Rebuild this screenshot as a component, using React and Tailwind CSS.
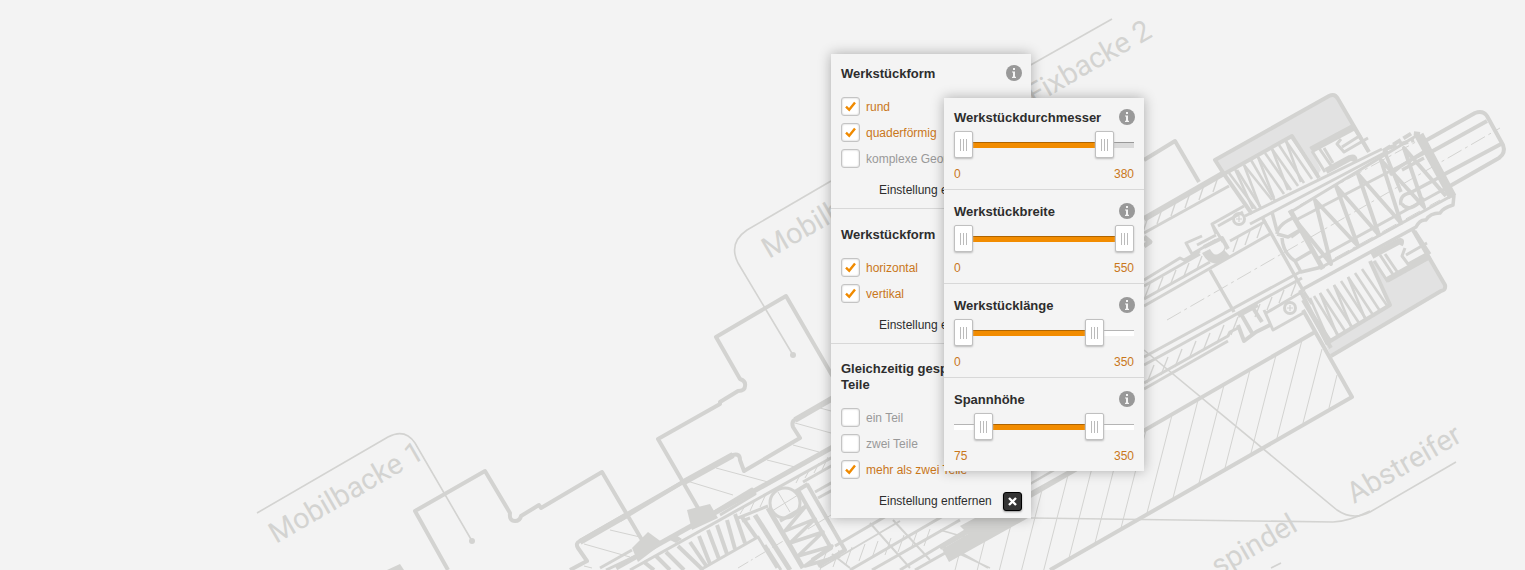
import { useState } from "react";

const LINE = "#d3d3d1";

/* Hatching and springs are lists of [x1, y1, x2, y2] segments. */
const Segments = ({ list, width }) =>
  list.map((s, i) => (
    <line key={i} x1={s[0]} y1={s[1]} x2={s[2]} y2={s[3]} strokeWidth={width} />
  ));

const repeat = (count, [x1, y1, x2, y2], [dx, dy]) =>
  Array.from({ length: count }, (_, i) => [
    x1 + dx * i,
    y1 + dy * i,
    x2 + dx * i,
    y2 + dy * i,
  ]);

const jawHatch = [
  [687, 481, 733, 495],
  [716, 468, 768, 482],
  [767, 460, 795, 467],
  [793, 445, 819, 452],
  [795, 423, 831, 433],
  [820, 408, 831, 411],
  [584, 544, 630, 557],
  [610, 530, 640, 537],
  [584, 566, 592, 568],
];

const coilsUpper = [
  [1229, 173, 1256, 209], [1235, 169, 1253, 209], [1237, 170, 1261, 208],
  [1244, 165, 1272, 200], [1244, 165, 1260, 207], [1251, 160, 1275, 201],
  [1258, 157, 1284, 194], [1258, 157, 1274, 198], [1265, 153, 1291, 190],
  [1272, 149, 1298, 186], [1272, 149, 1288, 190], [1279, 145, 1304, 183],
  [1286, 141, 1312, 179], [1286, 141, 1301, 182], [1292, 138, 1318, 175],
];

const coilsLower = [
  [1304, 301, 1331, 341], [1310, 298, 1329, 341], [1314, 296, 1338, 335],
  [1320, 293, 1345, 331], [1320, 293, 1338, 337], [1327, 289, 1352, 327],
  [1334, 285, 1359, 323], [1334, 285, 1352, 329], [1341, 281, 1366, 319],
  [1348, 277, 1373, 315], [1348, 277, 1366, 321], [1355, 273, 1380, 311],
  [1362, 269, 1388, 307],
];

function TechnicalDrawing() {
  return (
    <svg
      viewBox="0 0 1525 570"
      preserveAspectRatio="xMinYMin slice"
      className="absolute inset-0 h-full w-full"
      aria-hidden="true"
    >
      <g fill="#e2e2e2">
        <path d="M1216 160 1331 95 1337 98 1353 125 1311 150 1321 170 1317 176 1292 136 1224 174Z" />
        <path d="M1372 262 1389 305 1325 343 1331 356 1445 287 1428 259 1388 281 1376 260Z" />
      </g>

      <g fill="none" stroke={LINE} strokeLinejoin="round">
        {/* leader lines */}
        <g strokeWidth="1.6">
          <path d="M257 513 388 437Q405 428 415 443L472 541" />
          <path d="M831 181 747 230Q728 243 738 263L793 355" />
          <path d="M1112 19 1020 71" />
          <path d="M1144 350 1337 510Q1353 521 1370 512L1456 462" />
          <path d="M1031 518 1333 522Q1347 522 1370 511" />
          <path d="M1271 568 1281 563" />
        </g>

        {/* jaws */}
        <g strokeWidth="4">
          <path d="M448 570 415 511 485 471 510 513Q509 521 515 521Q520 521 521 516L539 505 541 508 602 472 642 540" />
          <path d="M698 508 658 439 720 404V402L738 391Q745 391 745 386Q746 381 740 379L716 337 786 296 840 389" />
          <path d="M570 570 587 561 578 548Q575 543 580 541L683 482" />
          <path d="M620 520 683 482 733 455Q740 453 740 460L744 471 800 438 793 427Q791 421 796 419" />
          <path d="M1144 160 1175 141 1199 182" />
        </g>
        <path d="M580 542 627 515M684 482 733 455M795 420 840 394" strokeWidth="6" />
        <Segments list={jawHatch} width="1" />

        {/* guide rails of the lower left body */}
        <path d="M616 568 840 443" strokeWidth="5" />
        <path d="M630 570 840 453M714 512 752 489 755 494 720 515M600 568 632 550M606 570 638 555" strokeWidth="3" />
        <Segments
          list={[
            [644, 562, 654, 570], [656, 556, 670, 570], [666, 552, 684, 570],
            [678, 546, 703, 570], [690, 542, 707, 567], [699, 536, 710, 564],
            [708, 530, 719, 559], [717, 525, 727, 554], [727, 520, 735, 549],
            [735, 514, 745, 543], [742, 517, 756, 537],
          ]}
          width="4"
        />
        <path d="M700 570 758 537 777 568M738 518 768 506M742 521 750 518M765 545 781 570" strokeWidth="3" />
        <path d="M755 515 790 570M768 508 803 568" strokeWidth="5" />
        <circle cx="785" cy="503" r="15" strokeWidth="3" />
        <path d="M778 492 790 512M772 511 798 495M808 529 831 515" strokeWidth="1" />
        <path d="M780 521 806 506 785 531 815 519 790 543 823 532 798 556 832 546 805 566 840 556" strokeWidth="3.5" />
        <path d="M798 490 831 548 812 560M807 484 845 550 818 566M795 492 808 484" strokeWidth="4" />
        <path d="M803 482 840 461M815 492 840 478M818 498 840 486" strokeWidth="3" />
        <path d="M740 514 745 506M750 511 755 500M760 507 766 494M796 483 800 475M805 478 810 469M814 473 819 463M822 470 828 457" strokeWidth="1" />
        <path d="M738 568 785 540" strokeWidth="1" strokeDasharray="12 3 2 3" />

        {/* lower middle body, partly below the filter panels */}
        <path d="M835 546 900 508M850 570 950 512M872 570 960 520M900 570 980 522M915 570 1000 522" strokeWidth="3" />
        <path d="M820 568 900 521M832 554 850 568M870 523 910 568M893 520 930 560" strokeWidth="2" />
        <Segments list={repeat(9, [826, 553, 820, 570], [13, -3])} width="1" />
        <path d="M940 530 975 540M940 545 990 568M960 552 988 568" strokeWidth="1.5" />
        <path d="M1315 332 940 548M1303 310 1352 397 1050 570" strokeWidth="4" />
        <path d="M1075 458 1030 484M1030 493 1073 469" strokeWidth="2.5" />
        <Segments list={repeat(14, [1302, 340, 1277, 438], [-26, 15])} width="1" />
        <path d="M1322 349 1303 423M1337 375 1329 408" strokeWidth="1" />

        {/* upper housing */}
        <path d="M1144 219 1224 173" strokeWidth="6" />
        <path d="M1224 174 1215 160 1329 96Q1335 93 1338 99L1369 152" strokeWidth="4" />
        <path d="M1224 174 1292 136 1319 178M1224 174 1252 214" strokeWidth="4" />
        <path d="M1144 233 1229 186" strokeWidth="3" />
        <Segments list={repeat(6, [1218, 177, 1213, 192], [-14, 8])} width="1.3" />
        <Segments list={coilsUpper} width="2.6" />
        <path d="M1311 150 1354 127" strokeWidth="7" />
        <path d="M1312 151 1325 172M1319 148 1332 167M1324 148 1333 163" strokeWidth="3" />
        <path d="M1354 128 1368 151M1341 139 1337 144 1344 152 1368 138M1342 147 1361 135" strokeWidth="3" />
        <path d="M1326 171 1350 158Q1356 156 1354 162" strokeWidth="6" />
        <path d="M1245 216 1382 149M1250 224 1388 151" strokeWidth="3" />

        {/* clamp elements on the upper tube */}
        <path d="M1244 206 1212 224 1216 234M1243 212 1218 226M1212 224 1223 242M1216 240 1192 254 1186 243 1202 236M1197 245 1216 235" strokeWidth="3" />
        <path d="M1206 251Q1214 266 1227 253" strokeWidth="9" />
        <path d="M1204 247 1222 238 1228 249" strokeWidth="4" />
        <circle cx="1239" cy="219" r="5.5" strokeWidth="3" />
        <path d="M1236 219H1242M1239 216V222" strokeWidth="1.2" />
        <path d="M1144 280 1180 258 1184 260 1200 251M1144 286 1200 254M1230 241 1266 221M1144 306 1270 234M1144 299 1210 262" strokeWidth="3" />
        <Segments list={repeat(5, [1202, 256, 1197, 269], [-13, 7])} width="1.3" />
        <Segments list={repeat(4, [1262, 224, 1257, 238], [-12, 7])} width="1.3" />
        <path d="M1144 237 1150 242 1144 246" strokeWidth="5" />

        {/* tube with its long spring */}
        <path d="M1262 217 1304 292M1210 270 1234 312M1272 212 1277 231" strokeWidth="3.5" />
        <path d="M1277 234Q1278 224 1295 217M1277 234 1288 237 1300 230M1282 238Q1283 253 1295 261L1312 251M1295 261 1301 272 1322 267M1291 237 1302 229" strokeWidth="3.5" />
        <path d="M1289 213 1416 136M1322 267 1453 195M1294 221 1425 153M1317 259 1448 187" strokeWidth="3" />
        <path d="M1290 210 1323 269M1416 134 1451 198M1421 134 1454 196" strokeWidth="5" />
        <path d="M1292 216 1331 264 1315 200 1358 246 1336 186 1379 235 1358 174 1401 223 1381 160 1424 207 1404 148 1446 196" strokeWidth="4" />
        <path d="M1384 150 1401 192M1390 175 1401 166 1430 148M1401 205Q1399 195 1410 193L1440 177M1402 204Q1409 214 1424 198M1402 170 1424 158" strokeWidth="3.5" />
        <path d="M1383 151 1412 133 1420 134M1388 148 1414 140" strokeWidth="4" strokeDasharray="9 3" />
        <path d="M1454 195 1453 205Q1443 208 1440 213Q1430 213 1426 220Q1420 219 1416 227L1303 289" strokeWidth="3.5" />
        <path d="M1167 320 1500 128M1300 205 1425 137M1335 258 1440 200" strokeWidth="1" strokeDasharray="16 4 3 4" />

        {/* spindle end */}
        <path d="M1425 141 1475 113Q1483 110 1487 116L1503 145Q1506 153 1499 158L1450 186" strokeWidth="4" />
        <path d="M1431 152 1487 121M1443 175 1501 144" strokeWidth="4" />

        {/* lower housing */}
        <path d="M1413 230 1445 285Q1446 290 1441 291L1331 356M1303 300 1331 348" strokeWidth="4" />
        <path d="M1300 290 1327 343 1390 305 1370 261" strokeWidth="4" />
        <Segments list={coilsLower} width="2.6" />
        <path d="M1374 261 1388 282M1380 255 1394 276M1385 254 1398 273" strokeWidth="3" />
        <path d="M1387 280 1430 256" strokeWidth="6" />
        <path d="M1372 256 1398 242Q1403 239 1400 245" strokeWidth="6" />
        <path d="M1405 248 1402 256 1408 264 1430 252M1406 255 1427 243M1415 231 1430 254" strokeWidth="3" />
        <path d="M1144 357 1300 272M1144 365 1302 278M1144 383 1228 336 1230 332 1240 327M1144 389 1228 341M1304 292 1312 304" strokeWidth="3" />
        <Segments list={repeat(7, [1238, 317, 1231, 335], [-14, 8])} width="1.3" />
        <Segments list={repeat(4, [1296, 283, 1291, 296], [-12, 7])} width="1.3" />
        <path d="M1238 325 1244 341 1256 332 1270 325M1241 314 1252 333M1253 308 1262 322M1238 316 1258 305" strokeWidth="4" />
        <path d="M1264 310 1273 330 1305 312M1266 313 1300 293" strokeWidth="3" />
        <circle cx="1290" cy="308" r="5.5" strokeWidth="3" />
        <path d="M1287 308H1293M1290 305V311" strokeWidth="1.2" />
      </g>

      <g fill={LINE}>
        <circle cx="472" cy="541" r="3" />
        <circle cx="793" cy="355" r="3" />
        <path d="M687 510 698 507 710 504 718 518 692 530Z" />
        <path d="M632 548 648 532 663 543 638 562Z" />
        <path d="M670 540 676 535 682 539 676 543Z" />
        <path d="M942 549 968 534 960 526 975 518H1028L949 562Z" />
        <path d="M387 570 400 564 404 570Z" />
      </g>

      <g fill={LINE} fontFamily="Roboto, sans-serif" fontSize="29">
        <text transform="translate(276 544) rotate(-30)">Mobilbacke 1</text>
        <text transform="translate(769 259) rotate(-30)">Mobilbacke 2</text>
        <text transform="translate(1034 105) rotate(-30)">Fixbacke 2</text>
        <text transform="translate(1354 504) rotate(-30)">Abstreifer</text>
        <text transform="translate(1299 530) rotate(-30)" textAnchor="end">
          spindel
        </text>
      </g>
    </svg>
  );
}

function InfoButton({ topic }) {
  return (
    <button type="button" aria-label={`Info: ${topic}`} className="h-4 w-4 shrink-0">
      <svg viewBox="0 0 16 16" className="h-4 w-4">
        <circle cx="8" cy="8" r="8" fill="#999" />
        <path d="M7 3h2v2H7zM6 6.4h3v5.4h1V13H6v-1.2h1V7.6H6z" fill="#f4f4f4" />
      </svg>
    </button>
  );
}

function Heading({ children, info }) {
  return (
    <div className="flex items-start justify-between pr-[9px] pl-2.5">
      <h2
        className={`pt-px text-[13px] leading-4 font-bold text-[#2d2d2d] ${info ? "" : "max-w-[160px]"}`}
      >
        {children}
      </h2>
      {info && <InfoButton topic={children} />}
    </div>
  );
}

function CheckRow({ label, initial }) {
  const [checked, setChecked] = useState(initial);
  return (
    <label
      className={`flex h-[26px] items-center gap-1.5 whitespace-nowrap ${checked ? "text-[#c9771b]" : "text-[#999]"}`}
    >
      <span className="grid shrink-0">
        <input
          type="checkbox"
          checked={checked}
          onChange={(e) => setChecked(e.target.checked)}
          className="col-start-1 row-start-1 h-[19px] w-[19px] appearance-none rounded-[3px] border border-[#c4c4c4] bg-white shadow-[inset_0_0_2px_#bbb]"
        />
        {checked && (
          <svg
            viewBox="0 0 19 19"
            className="pointer-events-none col-start-1 row-start-1 h-[19px] w-[19px]"
            fill="none"
            stroke="#f08a00"
            strokeWidth="2.4"
          >
            <path d="M5 9.6 8.2 12.8 14 5.4" />
          </svg>
        )}
      </span>
      <span className="pt-0.5">{label}</span>
    </label>
  );
}

function FilterGroup({ title, info, options, className }) {
  return (
    <section className={className}>
      <Heading info={info}>{title}</Heading>
      <div className="mt-[11px] pl-2.5">
        {options.map(([label, on]) => (
          <CheckRow key={label} label={label} initial={on} />
        ))}
      </div>
      <button
        type="button"
        className="mt-[9px] flex h-5 w-full items-center justify-between pr-[9px] pl-12 text-[#2d2d2d]"
      >
        Einstellung entfernen
        <span className="grid h-[19px] w-[19px] place-items-center rounded-[3px] border border-black bg-[#333] shadow-[0_1px_2px_#999]">
          <svg viewBox="0 0 9 9" className="h-[9px] w-[9px]" stroke="#fff" strokeWidth="2.4">
            <path d="M1 1 8 8M8 1 1 8" />
          </svg>
        </span>
      </button>
    </section>
  );
}

function Handle({ fraction }) {
  return (
    <span
      className="pointer-events-none absolute top-0 flex h-[27px] w-[19px] items-center justify-center gap-0.5 rounded-[2px] border border-[#c0c0c0] bg-white shadow-[0_1px_2px_#bbb]"
      style={{ left: `calc((100% - 19px) * ${fraction})` }}
    >
      <i className="h-3 w-px bg-[#bbb]" />
      <i className="h-3 w-px bg-[#bbb]" />
      <i className="h-3 w-px bg-[#bbb]" />
    </span>
  );
}

function RangeFilter({ title, min, max, from, to, dark, className }) {
  const [low, setLow] = useState(from);
  const [high, setHigh] = useState(to);
  const part = (v) => (v - min) / (max - min);
  const inputClass =
    "pointer-events-none absolute inset-0 h-full w-full opacity-0 [&::-webkit-slider-thumb]:pointer-events-auto";
  return (
    <section className={className}>
      <Heading info>{title}</Heading>
      <div className="relative mx-2.5 mt-[5px] flex h-7 items-center">
        <div
          className={`h-1.5 w-full border-t ${dark ? "border-[#999] bg-[#dadada]" : "border-[#b5b5b5] bg-white"}`}
        >
          <div
            className="-mt-px h-1.5 border-t border-[#b06500] bg-[#f28c00]"
            style={{
              marginLeft: `${part(low) * 100}%`,
              width: `${(part(high) - part(low)) * 100}%`,
            }}
          />
        </div>
        <Handle fraction={part(low)} />
        <Handle fraction={part(high)} />
        <input
          type="range"
          aria-label={`${title} von`}
          min={min}
          max={max}
          value={low}
          onChange={(e) => setLow(Math.min(+e.target.value, high))}
          className={inputClass}
        />
        <input
          type="range"
          aria-label={`${title} bis`}
          min={min}
          max={max}
          value={high}
          onChange={(e) => setHigh(Math.max(+e.target.value, low))}
          className={inputClass}
        />
      </div>
      <div className="mx-2.5 mt-[7px] flex justify-between leading-4 text-[#c9771b]">
        <output>{low}</output>
        <output>{high}</output>
      </div>
    </section>
  );
}

const panel = "w-[200px] shrink-0 bg-[#f4f4f4] shadow-[0_0_12px_rgba(0,0,0,0.3)]";

export default function App() {
  return (
    <main className="relative min-h-screen overflow-hidden bg-[#f3f3f3] font-['Liberation_Sans',Arial,sans-serif] text-xs">
      <TechnicalDrawing />
      <div className="relative flex items-start pt-[54px] pl-[831px]">
        <form className={panel}>
          <FilterGroup
            title="Werkstückform"
            info
            options={[
              ["rund", true],
              ["quaderförmig", true],
              ["komplexe Geometrie", false],
            ]}
            className="border-b border-[#d8d8d8] pt-[11px] pb-2"
          />
          <FilterGroup
            title="Werkstückform"
            options={[
              ["horizontal", true],
              ["vertikal", true],
            ]}
            className="border-b border-[#d8d8d8] pt-[17px] pb-2"
          />
          <FilterGroup
            title="Gleichzeitig gespannte Teile"
            options={[
              ["ein Teil", false],
              ["zwei Teile", false],
              ["mehr als zwei Teile", true],
            ]}
            className="pt-4 pb-[7px]"
          />
        </form>
        <form className={`${panel} relative mt-11 -ml-[87px]`}>
          <RangeFilter
            title="Werkstückdurchmesser"
            min={0}
            max={434}
            from={0}
            to={380}
            dark
            className="border-b border-[#d8d8d8] pt-[11px] pb-[7px]"
          />
          <RangeFilter
            title="Werkstückbreite"
            min={0}
            max={550}
            from={0}
            to={550}
            className="border-b border-[#d8d8d8] pt-[13px] pb-[7px]"
          />
          <RangeFilter
            title="Werkstücklänge"
            min={0}
            max={430}
            from={0}
            to={350}
            className="border-b border-[#d8d8d8] pt-[13px] pb-[7px]"
          />
          <RangeFilter
            title="Spannhöhe"
            min={25}
            max={425}
            from={75}
            to={350}
            className="pt-[13px] pb-[7px]"
          />
        </form>
      </div>
    </main>
  );
}
